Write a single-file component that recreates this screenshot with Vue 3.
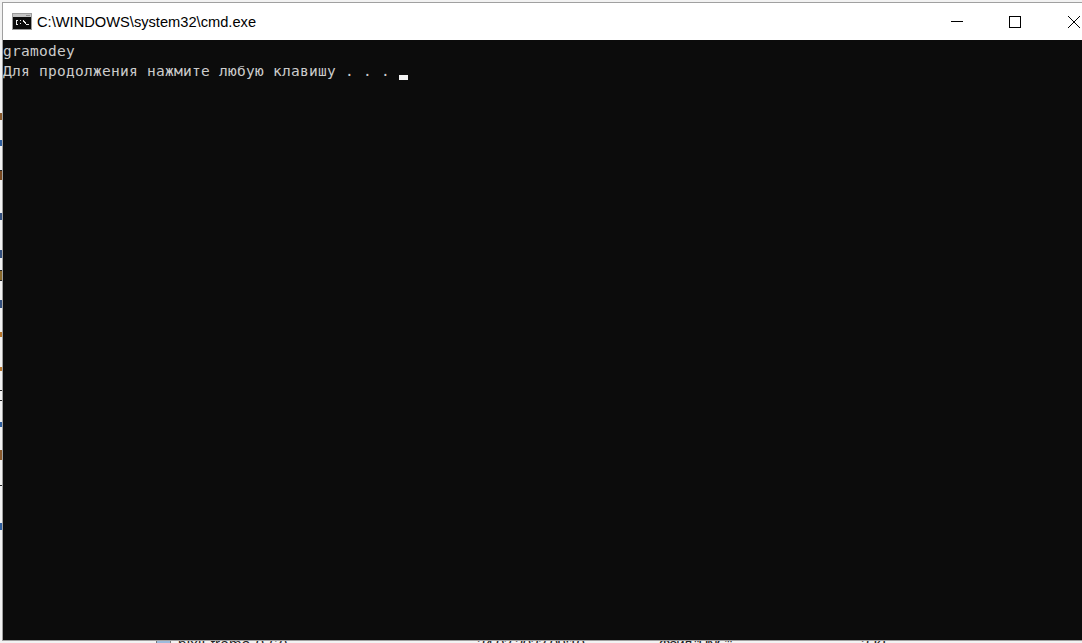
<script setup>
const lines = ['gramodey', 'Для продолжения нажмите любую клавишу . . .']
const leftMarks = [
  { top: 113, height: 7, color: '#8a5a2c' },
  { top: 140, height: 6, color: '#2f5f9f' },
  { top: 170, height: 1, color: '#222222' },
  { top: 171, height: 9, color: '#7a4a20' },
  { top: 213, height: 7, color: '#33507f' },
  { top: 250, height: 8, color: '#33507f' },
  { top: 270, height: 1, color: '#222222' },
  { top: 271, height: 9, color: '#8a6a2c' },
  { top: 280, height: 1, color: '#222222' },
  { top: 300, height: 8, color: '#33507f' },
  { top: 332, height: 5, color: '#b9772c' },
  { top: 367, height: 4, color: '#b9772c' },
  { top: 390, height: 1, color: '#222222' },
  { top: 400, height: 1, color: '#222222' },
  { top: 422, height: 5, color: '#2f5f9f' },
  { top: 450, height: 10, color: '#8a5a2c' },
  { top: 485, height: 1, color: '#222222' },
  { top: 523, height: 7, color: '#2f5f9f' },
]
</script>

<template>
  <div class="desktop">
    <span
      v-for="mark in leftMarks"
      :key="mark.top"
      class="mark"
      :style="{ top: mark.top + 'px', height: mark.height + 'px', background: mark.color }"
    ></span>
    <div class="file-row">
      <span class="file-icon"></span>
      <span class="file-name">pixil-frame-0 (3)</span>
      <span class="file-date">24.03.2023 09:10</span>
      <span class="file-type">Файл "PNG"</span>
      <span class="file-size">2 КБ</span>
    </div>
    <div class="window">
      <header class="titlebar">
        <svg class="app-icon" width="20" height="17" viewBox="0 0 20 17">
          <rect x="0" y="0" width="20" height="17" fill="#9c9c9c" />
          <rect x="1" y="1" width="18" height="3" fill="#c4c4c4" />
          <rect x="14" y="2" width="4" height="1" fill="#8a8a8a" />
          <rect x="1" y="4" width="18" height="12" fill="#0c0c0c" />
          <path d="M6 7H4v4h2M8 7.5h1M8 10.5h1M11 7l3 4M14 11.5h3" stroke="#ececec" stroke-width="1" fill="none" shape-rendering="crispEdges" />
        </svg>
        <span class="title">C:\WINDOWS\system32\cmd.exe</span>
        <div class="controls">
          <div class="control">
            <svg width="12" height="12" viewBox="0 0 12 12"><path d="M0 5.5h12" stroke="#000" fill="none" /></svg>
          </div>
          <div class="control">
            <svg width="12" height="12" viewBox="0 0 12 12"><rect x=".5" y=".5" width="11" height="11" stroke="#000" fill="none" /></svg>
          </div>
          <div class="control close">
            <svg width="12" height="12" viewBox="0 0 12 12"><path d="M0 0l12 12M12 0L0 12" stroke="#000" fill="none" /></svg>
          </div>
        </div>
      </header>
      <main class="console">
        <div v-for="line in lines" :key="line" class="line">{{ line }}</div>
        <span class="cursor"></span>
      </main>
    </div>
  </div>
</template>

<style>
html, body { margin: 0; overflow: hidden; background: #f2f2f2; }
</style>

<style scoped>
.desktop {
  position: relative;
  width: 1082px;
  height: 643px;
  background: #f2f2f2;
  overflow: hidden;
  box-sizing: border-box;
  padding: 2px 0 2px 2px;
  display: flex;
}
.mark {
  position: absolute;
  left: 0;
  width: 2px;
}
.file-row {
  position: absolute;
  left: 0;
  top: 635px;
  width: 100%;
  height: 18px;
  font: 15px/18px "Liberation Sans", Arial, sans-serif;
  color: #222;
  white-space: nowrap;
}
.file-row span { position: absolute; top: 0; }
.file-icon {
  left: 156px;
  width: 13px;
  height: 18px;
  border-left: 1px solid #777;
  border-right: 1px solid #777;
  background: #9dbbdd;
}
.file-name { left: 178px; letter-spacing: .3px; }
.file-date { left: 477px; letter-spacing: -.6px; }
.file-type { left: 659px; letter-spacing: -1.2px; }
.file-size { left: 861px; }
.window {
  position: relative;
  flex: 1;
  display: flex;
  flex-direction: column;
  border-left: 1px solid #a0a0a0;
  border-top: 1px solid #a0a0a0;
  border-bottom: 1px solid #a0a0a0;
  background: #fff;
  min-width: 0;
}
.titlebar {
  height: 37px;
  flex: none;
  display: flex;
  align-items: center;
  background: #fff;
}
.app-icon { margin-left: 9px; flex: none; }
.title {
  margin-left: 5px;
  font: 14.67px "Liberation Sans", Arial, sans-serif;
  color: #000;
  white-space: nowrap;
}
.controls {
  margin-left: auto;
  display: flex;
  align-items: center;
  height: 100%;
}
.control {
  width: 58px;
  display: flex;
  justify-content: center;
  align-items: center;
}
.control.close {
  width: 36px;
  justify-content: flex-end;
  margin-right: 2px;
}
.console {
  position: relative;
  flex: 1;
  background: #0c0c0c;
  color: #cccccc;
  font: 14.5px/20px "DejaVu Sans Mono", "Liberation Mono", monospace;
  padding: 1px 0 0 0;
  overflow: hidden;
}
.line {
  white-space: pre;
  height: 20px;
  letter-spacing: .27px;
}
.cursor {
  position: absolute;
  left: 396px;
  top: 35px;
  width: 9px;
  height: 5px;
  background: #f2f2f2;
}
</style>
